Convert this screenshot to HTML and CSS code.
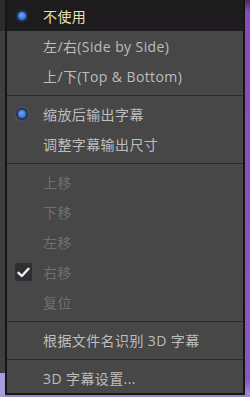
FILE: index.html
```html
<!DOCTYPE html>
<html lang="zh-CN">
<head>
  <meta charset="UTF-8" />
  <title>字幕菜单</title>
  <link rel="stylesheet" href="styles.css">
</head>
<body>
  <div class="edge-left"></div>

  <div class="menu">
    <div class="item active">
      <span class="mark"><span class="dot"></span></span>
      <span class="label">不使用</span>
    </div>
    <div class="item">
      <span class="mark"></span>
      <span class="label">左/右(Side by Side)</span>
    </div>
    <div class="item">
      <span class="mark"></span>
      <span class="label">上/下(Top &amp; Bottom)</span>
    </div>
    <div class="sep"></div>
    <div class="item">
      <span class="mark"><span class="dot ring"></span></span>
      <span class="label">缩放后输出字幕</span>
    </div>
    <div class="item">
      <span class="mark"></span>
      <span class="label">调整字幕输出尺寸</span>
    </div>
    <div class="sep"></div>
    <div class="item off">
      <span class="mark"></span>
      <span class="label">上移</span>
    </div>
    <div class="item off">
      <span class="mark"></span>
      <span class="label">下移</span>
    </div>
    <div class="item off">
      <span class="mark"></span>
      <span class="label">左移</span>
    </div>
    <div class="item off">
      <span class="mark">
        <span class="check">
          <svg width="13" height="11" viewBox="0 0 13 11">
            <path d="M1.5 5.8 L4.8 9 L11.5 1.8" fill="none" stroke="#f2f2f2" stroke-width="2.4" stroke-linecap="round" stroke-linejoin="round"/>
          </svg>
        </span>
      </span>
      <span class="label">右移</span>
    </div>
    <div class="item off">
      <span class="mark"></span>
      <span class="label">复位</span>
    </div>
    <div class="sep"></div>
    <div class="item">
      <span class="mark"></span>
      <span class="label">根据文件名识别 3D 字幕</span>
    </div>
    <div class="sep"></div>
    <div class="item">
      <span class="mark"></span>
      <span class="label">3D 字幕设置...</span>
    </div>
  </div>

  <div class="edge-right"></div>
</body>
</html>
```

FILE: styles.css
```css
body {
  margin: 0;
  height: 397px;
  display: flex;
  align-items: flex-start;
  background: #8f86cf;
  font-family: "Open Sans", "Noto Sans CJK SC", sans-serif;
  font-size: 14px;
  letter-spacing: 0.4px;
  overflow: hidden;
}
.edge-left {
  width: 5px;
  height: 397px;
  background: linear-gradient(#2c2c2c 0, #2c2c2c 31px, #3e3e3e 31px, #3e3e3e 373px, #a59cdc 373px);
}
.edge-right {
  flex: 1;
  height: 397px;
  background: linear-gradient(#4a2a5e 0, #8a4bb8 12px, #8d55c2 380px, #9a86d6 392px);
}
.menu {
  width: 236px;
  background: #474747;
  border: 2px solid #151515;
  border-top: 1px solid #1a1a1a;
  color: #bdbdbd;
}
.item {
  display: flex;
  align-items: center;
  height: 30px;
}
.item.active {
  background: #1d1b1e;
  color: #e6e1b0;
}
.item.off {
  color: #6f6f6f;
}
.mark {
  width: 36px;
  display: flex;
  align-items: center;
}
.label {
  white-space: nowrap;
}
.dot {
  width: 8px;
  height: 8px;
  margin-left: 11px;
  border-radius: 50%;
  background: radial-gradient(circle at 45% 40%, #6fa8ff 0, #3a7ae6 55%, #2a5eb8 100%);
  box-shadow: 0 0 3px 1px rgba(70, 130, 240, 0.55);
}
.dot.ring {
  box-shadow: 0 0 0 2px #2a3440, 0 0 4px 2px rgba(60, 110, 200, 0.5);
}
.check {
  width: 17px;
  height: 18px;
  margin-left: 8px;
  border-radius: 2px;
  background: #2f2f33;
  display: flex;
  align-items: center;
  justify-content: center;
}
.sep {
  height: 8px;
  display: flex;
  align-items: center;
}
.sep::after {
  content: "";
  flex: 1;
  height: 1px;
  background: #2a2a2a;
}
```
